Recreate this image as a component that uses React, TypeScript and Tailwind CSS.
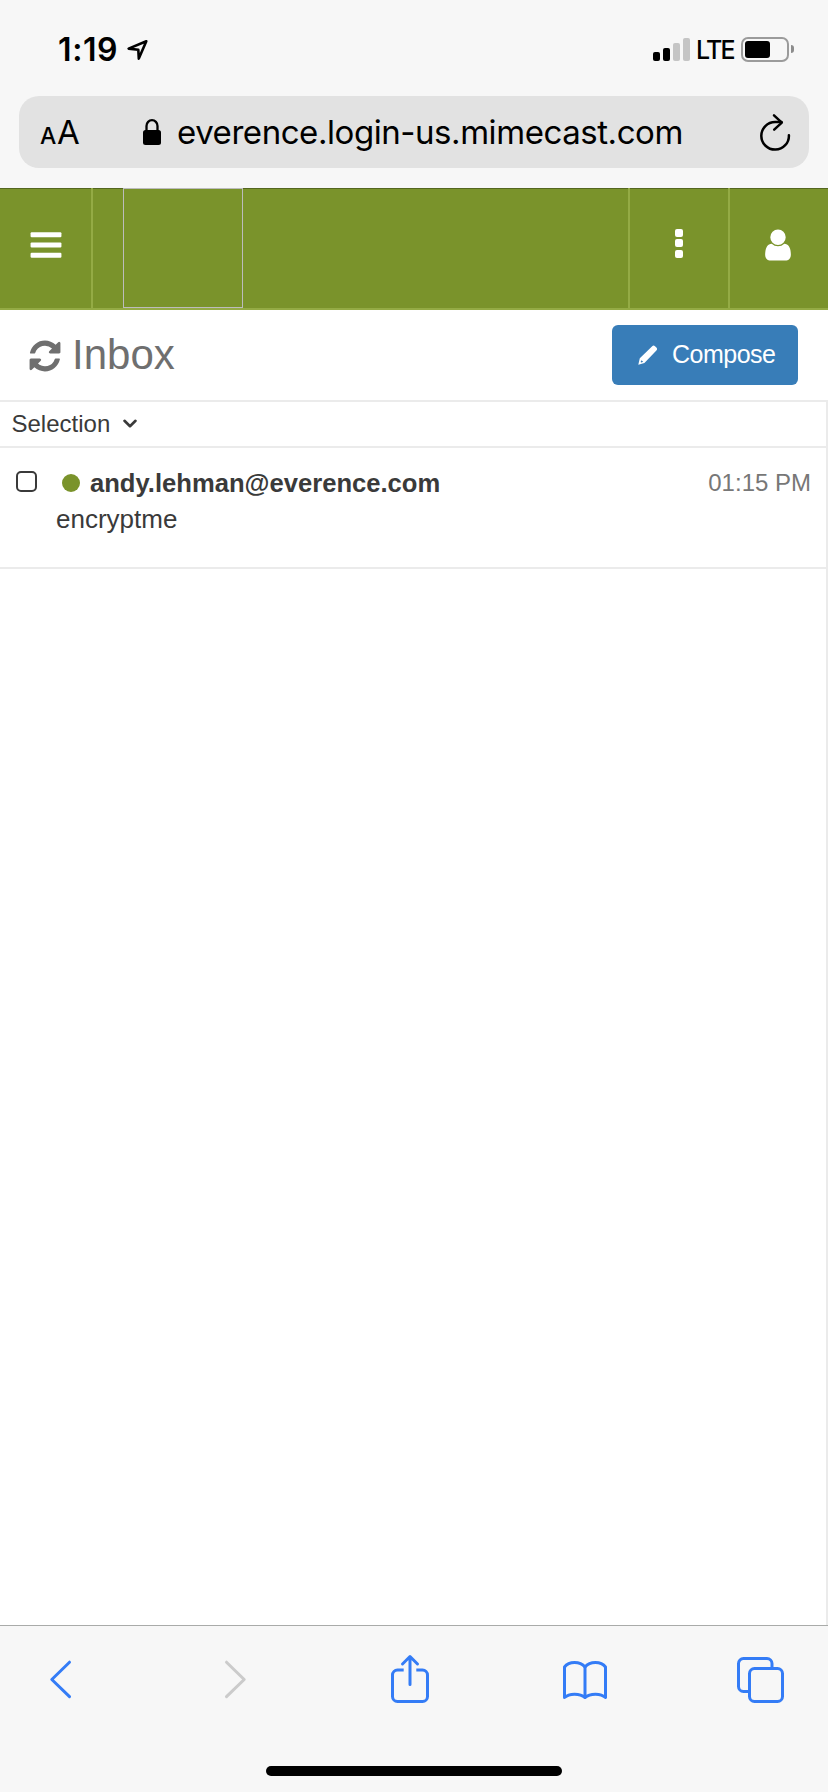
import React from 'react';

const SF = 'font-[Inter,sans-serif]';
const HELV = "font-['Liberation_Sans',sans-serif]";

function StatusBar() {
  return (
    <div className={`flex h-24 items-start justify-between pr-[34px] pl-[58px] ${SF}`}>
      <div className="flex items-start">
        <div className="mt-[30px] w-[62px] text-[32px] leading-[40px] font-semibold tracking-[0.6px] whitespace-nowrap">1:19</div>
        <svg className="mt-[38px] ml-[6px] h-6 w-6" viewBox="0 0 24 24" fill="none" stroke="black" strokeWidth="2.6" strokeLinejoin="round">
          <path d="M20.300 3.200 L2.600 10.600 L12.300 11.800 L12.800 20.600 Z" />
        </svg>
      </div>
      <div className="flex items-start">
        <div className="mt-[38px] flex h-[23px] items-end gap-[3px]">
          <div className="h-[9px] w-[7px] rounded-[2px] bg-black" />
          <div className="h-[13px] w-[7px] rounded-[2px] bg-black" />
          <div className="h-[18px] w-[7px] rounded-[2px] bg-[#c5c5c5]" />
          <div className="h-[23px] w-[7px] rounded-[2px] bg-[#c5c5c5]" />
        </div>
        <div className="mt-[35px] ml-[5px] w-[46px] pl-px text-[25px] leading-[30px] font-medium tracking-[-1.8px]">LTE</div>
        <div className="mt-[37px] h-[25px] w-12 rounded-[7px] border-2 border-[#9b9b9b] p-[2px]">
          <div className="h-[17px] w-[25px] rounded-[3px] bg-black" />
        </div>
        <div className="mt-[45px] ml-[2px] h-2 w-[3px] rounded-r-full bg-[#8c8c8c]" />
      </div>
    </div>
  );
}

function AddressBar() {
  return (
    <div className={`mx-[19px] flex h-18 items-start rounded-[20px] bg-[#e2e2e2] ${SF}`}>
      <div className="ml-[21px] flex h-[57px] w-[103px] items-baseline pt-[16px]">
        <span className="w-[17px] text-[23px] leading-[40px] font-medium">A</span>
        <span className="text-[33px] leading-[40px] tracking-[-1px]">A</span>
      </div>
      <svg className="mt-[23px] h-[26px] w-[18px]" viewBox="0 0 18 26">
        <rect y="11" width="18" height="15" rx="2.5" />
        <path d="M3.5 12V7a5.5 5.8 0 0 1 11 0v5" fill="none" stroke="black" strokeWidth="2.3" />
      </svg>
      <div className="mt-4 ml-4 w-[583px] text-[33px] leading-[40px] tracking-[-0.44px] whitespace-nowrap">
        everence.login-us.mimecast.com
      </div>
      <svg className="mt-[17px] h-[38px] w-8" viewBox="0 0 32 38" fill="none" stroke="black" strokeWidth="2.5" strokeLinecap="round" strokeLinejoin="round">
        <path d="M28.900 22.200A13.800 13.800 0 1 1 15.200 9H21.500" />
        <path d="M14 2.400l7.800 7.200-7.600 7" />
      </svg>
    </div>
  );
}

function TopNav() {
  return (
    <div className="flex h-[122px] border-b-2 border-[#94ab45] bg-[#7a932b] shadow-[inset_0_1px_0_#546620]">
      <div className="w-[93px] border-r-2 border-[#94ab45] pt-[39px] pl-[28px]">
        <svg className="h-9 w-9" viewBox="0 0 1792 1792" fill="white">
          <rect x="128" y="256" width="1536" height="256" rx="56" />
          <rect x="128" y="768" width="1536" height="256" rx="56" />
          <rect x="128" y="1280" width="1536" height="256" rx="56" />
        </svg>
      </div>
      {/* empty logo slot */}
      <div className="ml-[30px] h-[120px] w-[120px] border border-[#bcbcbc]" />
      <div className="ml-auto flex w-[102px] flex-col items-center gap-[2.4px] border-x-2 border-[#94ab45] pt-[41px]">
        <div className="h-2 w-2 rounded-[2px] bg-white" />
        <div className="h-2 w-2 rounded-[2px] bg-white" />
        <div className="h-2 w-2 rounded-[2px] bg-white" />
      </div>
      <div className="w-[98px] pt-[39px] pl-[30px]">
        <svg className="h-9 w-9" viewBox="0 0 1792 1792" fill="white">
          <path d="M1536 1399q0 109-62.5 187t-150.5 78h-854q-88 0-150.5-78t-62.5-187q0-85 8.5-160.5t31.5-152 58.5-131 94-89 134.5-34.5q131 128 313 128t313-128q76 0 134.5 34.5t94 89 58.5 131 31.5 152 8.5 160.5zm-256-887q0 159-112.5 271.5t-271.5 112.5-271.5-112.5-112.5-271.5 112.5-271.5 271.5-112.5 271.5 112.5 112.5 271.5z" />
        </svg>
      </div>
    </div>
  );
}

function InboxHeader() {
  return (
    <div className="flex h-[90px] items-start justify-between pr-[30px] pl-[27px] text-[#6f6f6f]">
      <div className="flex items-start">
        <svg className="mt-7 h-9 w-9" viewBox="0 0 1792 1792" fill="currentColor">
          <path d="M1639 1056q0 5-1 7-64 268-268 434.5t-478 166.5q-146 0-282.5-55t-243.5-157l-129 129q-19 19-45 19t-45-19-19-45v-448q0-26 19-45t45-19h448q26 0 45 19t19 45-19 45l-137 137q71 66 161 102t187 36q134 0 250-65t186-179q11-17 53-117 8-23 30-23h192q13 0 22.5 9.5t9.5 22.5zm25-800v448q0 26-19 45t-45 19h-448q-26 0-45-19t-19-45 19-45l138-138q-148-137-349-137-134 0-250 65t-186 179q-11 17-53 117-8 23-30 23h-199q-13 0-22.5-9.5t-9.5-22.5v-7q65-268 270-434.5t480-166.5q146 0 284 55.5t245 156.5l130-129q19-19 45-19t45 19 19 45z" />
        </svg>
        <h1 className="mt-[21px] ml-[9px] text-[42px] leading-[48px]">Inbox</h1>
      </div>
      <button className="mt-[15px] flex h-[60px] w-[186px] items-center rounded-md bg-[#387db8] pl-[26px] text-[25px] tracking-[-0.5px] text-white">
        <svg className="mr-[14px] h-5 w-5" viewBox="0 0 20 20">
          <path d="M14.200 1.200a2 2 0 0 1 2.800 0l1.400 1.400a2 2 0 0 1 0 2.800L6.400 18 0.300 19.700 1.800 13.200Z" fill="white" />
          <path d="M3.500 15.200l1.700 1.600-1.900 0.800-.7-.7Z" fill="#387db8" />
        </svg>
        Compose
      </button>
    </div>
  );
}

function MessageList() {
  return (
    <div className="flex-1 border-t-2 border-r-2 border-[#ebebeb] text-[#3a3a3a]">
      <div className="flex h-[46px] items-start border-b-2 border-[#ebebeb] pl-[11.500px]">
        <span className="mt-[8px] w-[111px] text-[24px] leading-[28px]">Selection</span>
        <svg className="mt-[17px] h-[10px] w-[14px]" viewBox="0 0 14 10" fill="none" stroke="currentColor" strokeWidth="2.6" strokeLinecap="round" strokeLinejoin="round">
          <path d="M1.500 1.800L7 7.200l5.500-5.400" />
        </svg>
      </div>
      <div className="flex h-[121px] items-start border-b-2 border-[#ebebeb] pr-[15px] pl-4">
        <div className="mt-[23px] h-[21px] w-[21px] rounded-[5px] border-2 border-[#3a3a3a]" />
        <div className="ml-[19px] flex-1">
          <div className="flex items-center pt-[19px]">
            <div className="mr-[10px] ml-[6px] h-[18px] w-[18px] rounded-full bg-[#7a932b]" />
            <span className="text-[25.600px] leading-8 font-bold">andy.lehman@everence.com</span>
            <span className="ml-auto text-[24px] leading-8 text-[#777]">01:15 PM</span>
          </div>
          <div className="mt-[4px] text-[26px] leading-8">encryptme</div>
        </div>
      </div>
    </div>
  );
}

function Toolbar() {
  return (
    <div className="flex h-[167px] flex-col items-center border-t border-[#a9aba9] bg-[#f7f7f7]">
      <div className="flex h-[140px] w-full items-start pt-6 pl-[48px] text-[#347cf6]">
        <svg className="h-14 w-6" viewBox="0 0 24 56" fill="none" stroke="currentColor" strokeWidth="3" strokeLinecap="round" strokeLinejoin="round">
          <path d="M21.500 12.200L3.800 29.500l17.700 17.200" />
        </svg>
        <svg className="ml-[152px] h-14 w-6 text-[#cbcbcb]" viewBox="0 0 24 56" fill="none" stroke="currentColor" strokeWidth="3" strokeLinecap="round" strokeLinejoin="round">
          <path d="M2.500 12.200l17.700 17.300L2.500 46.700" />
        </svg>
        <svg className="ml-[142px] h-14 w-10" viewBox="0 0 40 56" fill="none" stroke="currentColor" strokeWidth="3" strokeLinejoin="round">
          <path d="M13.700 20H7.500a5 5 0 0 0-5 5v21.500a5 5 0 0 0 5 5h25a5 5 0 0 0 5-5V25a5 5 0 0 0-5-5h-6.200" />
          <path d="M20 34.500V7M12.500 14L20 6.500l7.500 7.500" strokeLinecap="round" />
        </svg>
        <svg className="ml-[133px] h-14 w-11" viewBox="0 0 44 56" fill="none" stroke="currentColor" strokeWidth="3" strokeLinecap="round" strokeLinejoin="round">
          <path d="M22 17C17 11 6 11 1.500 17v30.500C6 43 17 43 22 47.500 27 43 38 43 42.500 47.500V17C38 11 27 11 22 17z" />
          <path d="M22 17v30.500" />
        </svg>
        <svg className="ml-[130px] h-14 w-[48px]" viewBox="0 0 48 56" fill="none" stroke="currentColor" strokeWidth="3">
          <rect x="12.500" y="18.500" width="33" height="33" rx="5" />
          <path d="M12.500 41.500H6.500a5 5 0 0 1-5-5V13.500a5 5 0 0 1 5-5h23.500a5 5 0 0 1 5 5v5" />
        </svg>
      </div>
      <div className="h-[10px] w-[296px] rounded-full bg-black" />
    </div>
  );
}

export default function App() {
  return (
    <div className={`flex h-[1792px] w-[828px] flex-col overflow-hidden bg-white text-black ${HELV}`}>
      <div className="h-[188px] bg-[#f7f7f7]">
        <StatusBar />
        <AddressBar />
      </div>
      <TopNav />
      <InboxHeader />
      <MessageList />
      <Toolbar />
    </div>
  );
}
